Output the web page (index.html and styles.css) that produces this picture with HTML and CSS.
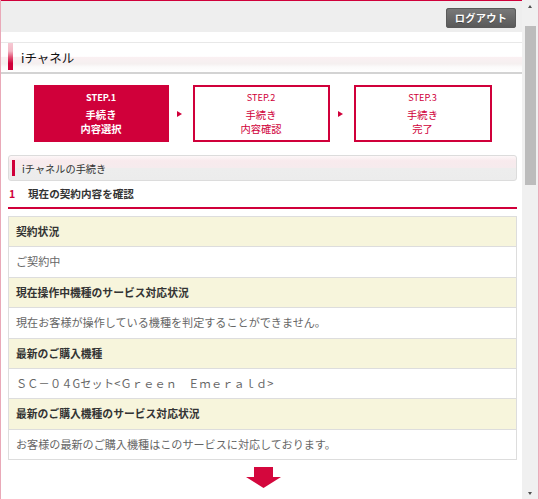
FILE: index.html
```html
<!DOCTYPE html>
<html lang="ja">
<head>
<meta charset="utf-8">
<title>iチャネル</title>
<link rel="stylesheet" href="styles.css">
</head>
<body>
<div class="frame">
  <div class="page">
    <div class="topbar"><a class="logout">ログアウト</a></div>
    <div class="titlebar"><span class="title-accent"></span><h1 class="title">iチャネル</h1></div>
    <div class="main">
      <div class="steps">
        <div class="step current"><span class="step-no">STEP.1</span><span class="step-lbl">手続き</span><span class="step-lbl">内容選択</span></div>
        <div class="step-sep"><span class="tri"></span></div>
        <div class="step step-w2"><span class="step-no">STEP.2</span><span class="step-lbl">手続き</span><span class="step-lbl">内容確認</span></div>
        <div class="step-sep"><span class="tri"></span></div>
        <div class="step step-w3"><span class="step-no">STEP.3</span><span class="step-lbl">手続き</span><span class="step-lbl">完了</span></div>
      </div>
      <div class="sectionhead"><span class="sec-bar"></span><span>iチャネルの手続き</span></div>
      <div class="subhead"><span class="num">1</span><span>現在の契約内容を確認</span></div>
      <div class="info">
        <div class="row head">契約状況</div>
        <div class="row body">ご契約中</div>
        <div class="row head">現在操作中機種のサービス対応状況</div>
        <div class="row body">現在お客様が操作している機種を判定することができません。</div>
        <div class="row head">最新のご購入機種</div>
        <div class="row body wide">ＳＣ－０４Gセット&lt;Ｇｒｅｅｎ　Ｅｍｅｒａｌｄ&gt;</div>
        <div class="row head">最新のご購入機種のサービス対応状況</div>
        <div class="row body">お客様の最新のご購入機種はこのサービスに対応しております。</div>
      </div>
      <div class="down">
        <svg width="35" height="21" viewBox="0 0 35 21"><path d="M8 0H27V10H35L17.5 21L0 10H8Z" fill="#d4073d"/></svg>
      </div>
    </div>
  </div>
  <div class="scrollbar">
    <div class="sb-btn"><span class="sb-up"></span></div>
    <div class="sb-track"><div class="sb-thumb"></div></div>
    <div class="sb-btn"><span class="sb-down"></span></div>
  </div>
</div>
</body>
</html>
```
FILE: styles.css
```css
html, body {
  margin: 0;
  padding: 0;
  background: #fff;
}
body {
  font-family: "Noto Sans CJK JP", "Noto Sans", sans-serif;
  color: #333;
  font-size: 10.8px;
}
.frame {
  display: flex;
  height: 499px;
  overflow: hidden;
  border-left: 1px solid #e9a9b8;
  border-right: 1px solid #e9a9b8;
}
.page {
  flex: 1;
  min-width: 0;
  border-top: 1px solid #d0003a;
}
.topbar {
  height: 31px;
  background: #eeeeee;
  display: flex;
  justify-content: flex-end;
  align-items: flex-start;
  padding-right: 6px;
}
.logout {
  margin-top: 7px;
  width: 70px;
  height: 20px;
  border-radius: 3px;
  background: linear-gradient(#7a7a7a, #585858);
  box-shadow: inset 0 0 0 1px #5a5a5a;
  color: #fff;
  font-weight: bold;
  font-size: 10.2px;
  letter-spacing: 0.3px;
  line-height: 20px;
  text-align: center;
  text-shadow: 0 1px 0 #444;
}
.titlebar {
  margin-top: 10px;
  border-top: 1px solid #e8e8e8;
  border-bottom: 2px solid #d3d3d3;
  height: 29px;
  display: flex;
  align-items: flex-start;
  padding-left: 7px;
  background: linear-gradient(#fff 0, #fff 46%, #faf0f2 50%, #f5f0f0 72%, #fbfafa 82%, #fff 100%);
}
.title-accent {
  width: 5px;
  height: 27px;
  background: linear-gradient(#f6c9d3 0, #f3b7c5 30%, #e0466c 55%, #d0003a 75%);
}
.title {
  margin: 0 0 0 8px;
  font-size: 12.5px;
  font-weight: normal;
  line-height: 29px;
  color: #111;
}
.main {
  padding: 11px 5px 0 7px;
}
.steps {
  width: 458px;
  margin: 0 auto;
  display: flex;
  height: 57px;
}
.step {
  box-sizing: border-box;
  width: 135px;
  border: 2px solid #d0003a;
  color: #d0003a;
  display: flex;
  flex-direction: column;
  align-items: center;
  padding-top: 4px;
}
.step-w2 { width: 137px; }
.step-w3 { width: 138px; }
.step.current {
  background: #d0003a;
  color: #fff;
  font-weight: bold;
}
.step-no {
  font-size: 9.2px;
  line-height: 12px;
  height: 12px;
  margin-bottom: 5px;
}
.step-lbl {
  font-size: 10.3px;
  line-height: 13.5px;
  height: 13.5px;
  overflow: visible;
}
.step-sep {
  width: 24px;
  display: flex;
  align-items: center;
  justify-content: center;
}
.tri {
  width: 0;
  height: 0;
  border-top: 3.5px solid transparent;
  border-bottom: 3.5px solid transparent;
  border-left: 5px solid #d0003a;
  margin-left: -2px;
}
.sectionhead {
  margin-top: 13px;
  height: 24px;
  border: 1px solid #dcdcdc;
  border-radius: 3px;
  display: flex;
  align-items: center;
  background: linear-gradient(#fdf7f8 0, #f8eaed 20%, #f6ebed 48%, #ededed 52%, #ececec 100%);
  font-size: 10.2px;
  color: #333;
}
.sec-bar {
  width: 3px;
  height: 16px;
  margin-left: 3px;
  margin-right: 7px;
  background: #d0003a;
}
.subhead {
  height: 26px;
  line-height: 26px;
  border-bottom: 2px solid #d0003a;
  font-size: 10.6px;
  font-weight: bold;
  color: #333;
  display: flex;
}
.num {
  color: #d0003a;
  width: 19px;
  padding-left: 1px;
}
.info {
  margin-top: 7px;
  border: 1px solid #dddddd;
  border-bottom: none;
}
.row {
  height: 29.375px;
  line-height: 29.375px;
  border-bottom: 1px solid #dddddd;
  padding: 0 7px;
  white-space: nowrap;
  overflow: hidden;
}
.row.head {
  background: #f7f5dc;
  font-weight: bold;
  color: #333;
}
.row.body {
  background: #fff;
  color: #666;
  font-size: 11.1px;
}
.row.wide {
  letter-spacing: 0.2px;
}
.down {
  margin-top: 7px;
  display: flex;
  justify-content: center;
  padding-left: 1px;
}
.scrollbar {
  width: 16px;
  background: #f0f0f0;
  display: flex;
  flex-direction: column;
}
.sb-btn {
  height: 17px;
  display: flex;
  justify-content: center;
  align-items: center;
}
.sb-up {
  width: 0;
  height: 0;
  border-left: 2.5px solid transparent;
  border-right: 2.5px solid transparent;
  border-bottom: 3px solid #505050;
  margin-top: -4px;
}
.sb-down {
  width: 0;
  height: 0;
  border-left: 2.5px solid transparent;
  border-right: 2.5px solid transparent;
  border-top: 3px solid #505050;
  margin-top: 5px;
}
.sb-track {
  flex: 1;
  padding-top: 9px;
  padding-left: 3px;
}
.sb-thumb {
  width: 11px;
  height: 159px;
  background: #bcbcbc;
}
```
